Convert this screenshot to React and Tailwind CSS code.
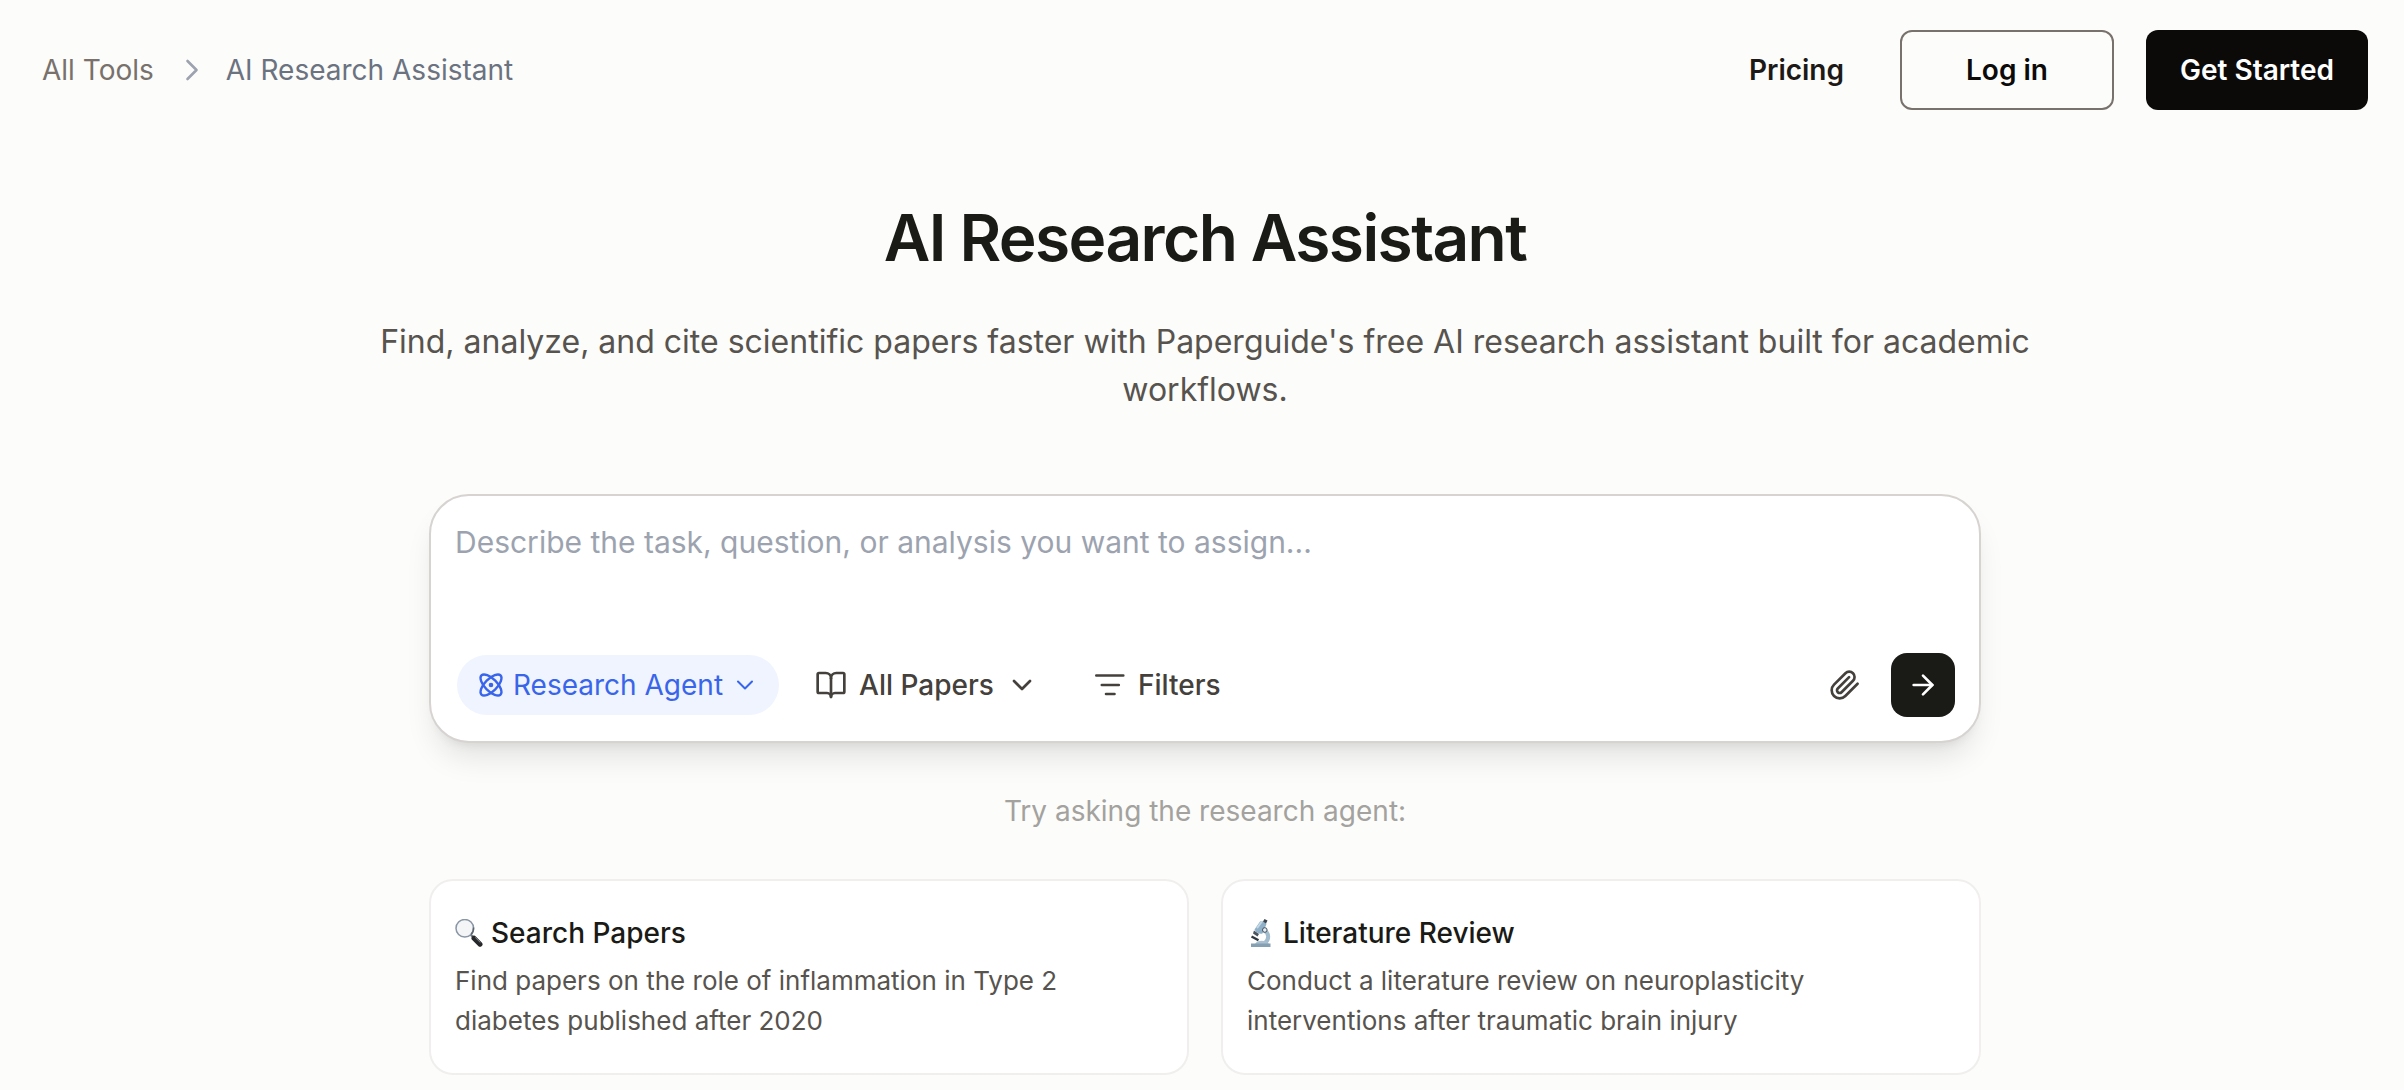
import React, { useState } from 'react';
import { ArrowRight, Atom, BookOpen, ChevronDown, ChevronRight } from 'lucide-react';

const PaperclipIcon = ({ className }) => (
    <svg className={className} viewBox="0 0 24 24" fill="none" stroke="currentColor" strokeWidth="2" strokeLinecap="round" strokeLinejoin="round" aria-hidden="true">
        <path d="m21.44 11.05-9.19 9.19a6 6 0 0 1-8.49-8.49l8.57-8.57A4 4 0 1 1 18 8.84l-8.59 8.57a2 2 0 0 1-2.83-2.83l8.49-8.48" />
    </svg>
);

const FiltersIcon = ({ className }) => (
    <svg className={className} viewBox="0 0 32 32" fill="none" stroke="currentColor" strokeWidth="2.6" strokeLinecap="round" aria-hidden="true">
        <path d="M2.3 6.5h27M7.8 16h17M12 25h8.5" />
    </svg>
);

const MagnifierIcon = ({ className }) => (
    <svg className={className} viewBox="0 0 28 28" aria-hidden="true">
        <path d="m15.500 15.500 4 4" stroke="#6f757c" strokeWidth="2.4" />
        <path d="m19 19.200 6 6" stroke="#25272a" strokeWidth="5" strokeLinecap="round" />
        <path d="m20.500 18.700 4.600 4.600" stroke="#85898e" strokeWidth="1" strokeLinecap="round" />
        <circle cx="9.800" cy="9.300" r="8.800" fill="#f4f5f7" stroke="#8a96a5" strokeWidth="1.500" />
        <path d="M16 15.500a8.800 8.800 0 0 0 2.500-7" fill="none" stroke="#5d656f" strokeWidth="1.500" />
    </svg>
);

const MicroscopeIcon = ({ className }) => (
    <svg className={className} viewBox="0 0 28 28" aria-hidden="true">
        <path d="M17 11.500c5.500 2.500 5.500 9 .5 13" fill="none" stroke="#a3bccd" strokeWidth="4" />
        <path d="M8 25c1.500-4.500 12-4.500 14 0z" fill="#a9c0d0" />
        <path d="M4 24.500h19.500V28H4z" fill="#86a0b3" />
        <path d="M7.500 10.500 13 2.500c3-1 5.500.5 6.500 2.500l-4 9.500c-3 1-6.500-1-8-4z" fill="#8fb0c6" />
        <path d="m10.500 8.500 4-5.500" stroke="#c3d8e5" strokeWidth="2" strokeLinecap="round" />
        <path d="m16 2.500 1.500-2.500 3 1.500L19 4.500z" fill="#3c4650" />
        <path d="m7 11.500 5 3.500-1.500 2.500-4.500-3z" fill="#4a5560" />
        <path d="m4.500 17.500 7 3.800" stroke="#2f3840" strokeWidth="2.400" />
        <circle cx="17.800" cy="11" r="2.300" fill="#e6eef3" stroke="#44525f" />
    </svg>
);

const suggestions = [
    {
        title: 'Search Papers',
        prompt: 'Find papers on the role of inflammation in Type 2 diabetes published after 2020',
        Icon: MagnifierIcon,
    },
    {
        title: 'Literature Review',
        prompt: 'Conduct a literature review on neuroplasticity interventions after traumatic brain injury',
        Icon: MicroscopeIcon,
    },
];

const Header = () => (
    <header className="flex items-center justify-between px-9 pt-[30px] text-[28px] leading-10">
        <nav aria-label="Breadcrumb" className="flex items-center text-[#78716c]">
            <a href="#tools">All Tools</a>
            <ChevronRight className="mr-4 ml-5 size-9 text-[#9ca3af]" strokeWidth={1.75} aria-hidden="true" />
            <span className="text-[#6b7280]">AI Research Assistant</span>
        </nav>
        <div className="flex items-center font-semibold text-[#0c0a09]">
            <a href="#pricing" className="mr-14 text-[#1c1917]">Pricing</a>
            <button type="button" className="mr-8 h-20 w-[214px] rounded-xl border-2 border-[#78716c]">Log in</button>
            <button type="button" className="h-20 w-[222px] rounded-xl bg-[#0c0a09] text-white">Get Started</button>
        </div>
    </header>
);

const PromptBox = ({ value, onChange }) => (
    <form
        onSubmit={(e) => e.preventDefault()}
        className="rounded-[40px] border-2 border-[#d6d3d1] bg-white p-6 shadow-[0_20px_30px_-6px_rgba(0,0,0,0.1),0_8px_12px_-8px_rgba(0,0,0,0.1)]"
    >
        <textarea
            aria-label="Task"
            value={value}
            onChange={(e) => onChange(e.target.value)}
            placeholder="Describe the task, question, or analysis you want to assign..."
            className="block h-[133px] w-full resize-none text-[30px] leading-[44px] outline-none placeholder:text-[#9ca3af]"
        />
        <div className="flex items-center justify-between pl-0.5 text-[28px] leading-10 text-[#44403c]">
            <div className="flex items-center">
                <button type="button" className="flex h-[60px] items-center rounded-full bg-[#eff4ff] px-5 text-[#3965ea]">
                    <Atom className="mr-2 size-7" />
                    Research Agent
                    <ChevronDown className="ml-2 size-7" strokeWidth={1.75} />
                </button>
                <button type="button" className="ml-9 flex items-center font-medium">
                    <BookOpen className="mr-3 size-8" />
                    All Papers
                    <ChevronDown className="ml-3 size-8" />
                </button>
                <button type="button" className="ml-14 flex items-center font-medium">
                    <FiltersIcon className="mr-3 size-8" />
                    Filters
                </button>
            </div>
            <div className="flex items-center gap-[30px]">
                <button type="button" aria-label="Attach file">
                    <PaperclipIcon className="size-8" />
                </button>
                <button type="submit" aria-label="Send" className="flex size-16 items-center justify-center rounded-2xl bg-[#1a1a17] text-white">
                    <ArrowRight className="size-8" />
                </button>
            </div>
        </div>
    </form>
);

const App = () => {
    const [task, setTask] = useState('');

    return (
        <div className="min-h-screen bg-[#fcfcfa] pl-[6px] font-['Inter',sans-serif] text-[#1a1a17]">
            <Header />
            <main className="px-9 pt-[88px]">
                <h1 className="text-center text-[64px] leading-20 font-semibold tracking-tight">AI Research Assistant</h1>
                <p className="mx-auto mt-10 max-w-[1740px] text-center text-[32px] leading-12 text-[#57534e]">
                    Find, analyze, and cite scientific papers faster with Paperguide's free AI research assistant built for academic workflows.
                </p>
                <div className="mx-auto mt-20 max-w-[1552px]">
                    <PromptBox value={task} onChange={setTask} />
                    <p className="mt-12 text-center text-[28px] leading-10 text-[#a3a29e]">Try asking the research agent:</p>
                    <div className="mt-12 grid grid-cols-2 gap-8 pb-4">
                        {suggestions.map(({ title, prompt, Icon }) => (
                            <button
                                key={title}
                                type="button"
                                onClick={() => setTask(prompt)}
                                className="flex flex-col rounded-3xl border-2 border-[#f0efee] bg-white px-6 py-8 text-left"
                            >
                                <span className="flex items-center gap-2 text-[28px] leading-10 font-medium">
                                    <Icon className="size-7" />
                                    {title}
                                </span>
                                <span className="mt-2 max-w-[640px] text-[26px] leading-10 text-[#57534e]">{prompt}</span>
                            </button>
                        ))}
                    </div>
                </div>
            </main>
        </div>
    );
};

export default App;
